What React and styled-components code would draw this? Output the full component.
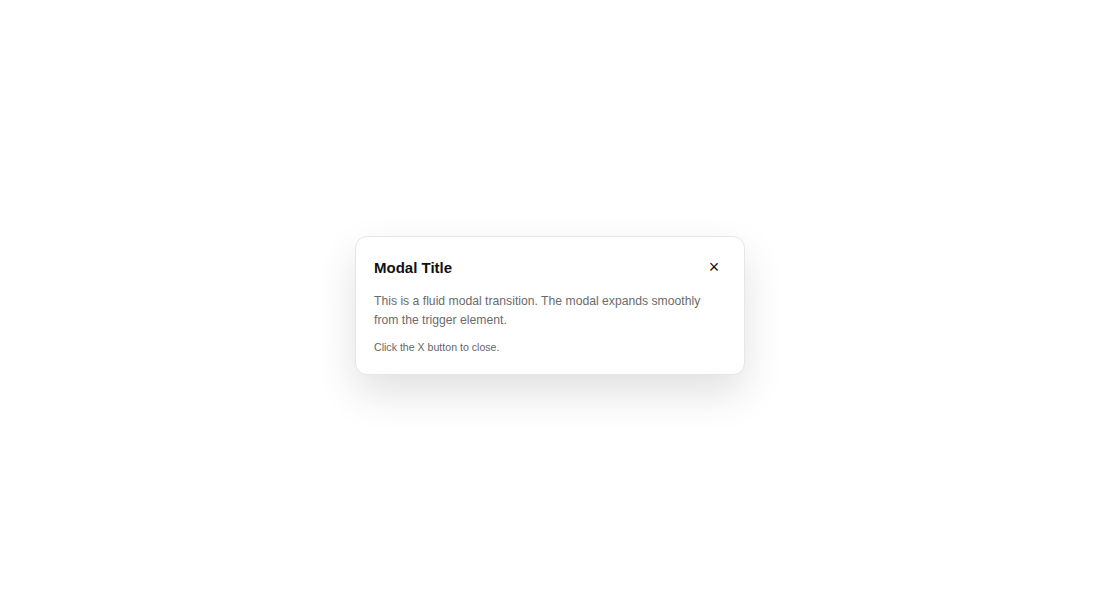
import React from "react";
import styled, { createGlobalStyle } from "styled-components";

const Global = createGlobalStyle`
  html, body {
    margin: 0;
    padding: 0;
    background: #ffffff;
    font-family: "Liberation Sans", Arial, sans-serif;
  }
`;

const App = () => {
  return (
    <>
      <Global />
      <Page>
        <Modal>
          <Header>
            <Title>Modal Title</Title>
            <Close aria-label="Close">×</Close>
          </Header>
          <Body>
            This is a fluid modal transition. The modal expands smoothly from the
            trigger element.
          </Body>
          <Hint>Click the X button to close.</Hint>
        </Modal>
      </Page>
    </>
  );
};
export default App;

const Page = styled.div`
  width: 100%;
  height: 611px;
  display: flex;
  justify-content: center;
  align-items: center;
`;

const Modal = styled.div`
  width: 390px;
  box-sizing: border-box;
  padding: 19px 18px 19px;
  background: #ffffff;
  border: 1px solid #e6e6e6;
  border-radius: 12px;
  box-shadow: 0 18px 40px rgba(0, 0, 0, 0.12);
  display: flex;
  flex-direction: column;
`;

const Header = styled.div`
  display: flex;
  justify-content: space-between;
  align-items: center;
  height: 24px;
  margin-bottom: 12px;
`;

const Title = styled.div`
  font-size: 15px;
  font-weight: bold;
  line-height: 20px;
  color: #111111;
`;

const Close = styled.button`
  width: 24px;
  height: 24px;
  border: none;
  background: transparent;
  padding: 0;
  display: flex;
  justify-content: center;
  align-items: center;
  font-family: "Liberation Sans", Arial, sans-serif;
  font-size: 18px;
  color: #111111;
  cursor: pointer;
`;

const Body = styled.p`
  margin: 0 0 10px;
  font-size: 12.2px;
  line-height: 18.7px;
  color: #6b6b6b;
`;

const Hint = styled.p`
  margin: 0;
  font-size: 10.6px;
  line-height: 16px;
  color: #666666;
`;
